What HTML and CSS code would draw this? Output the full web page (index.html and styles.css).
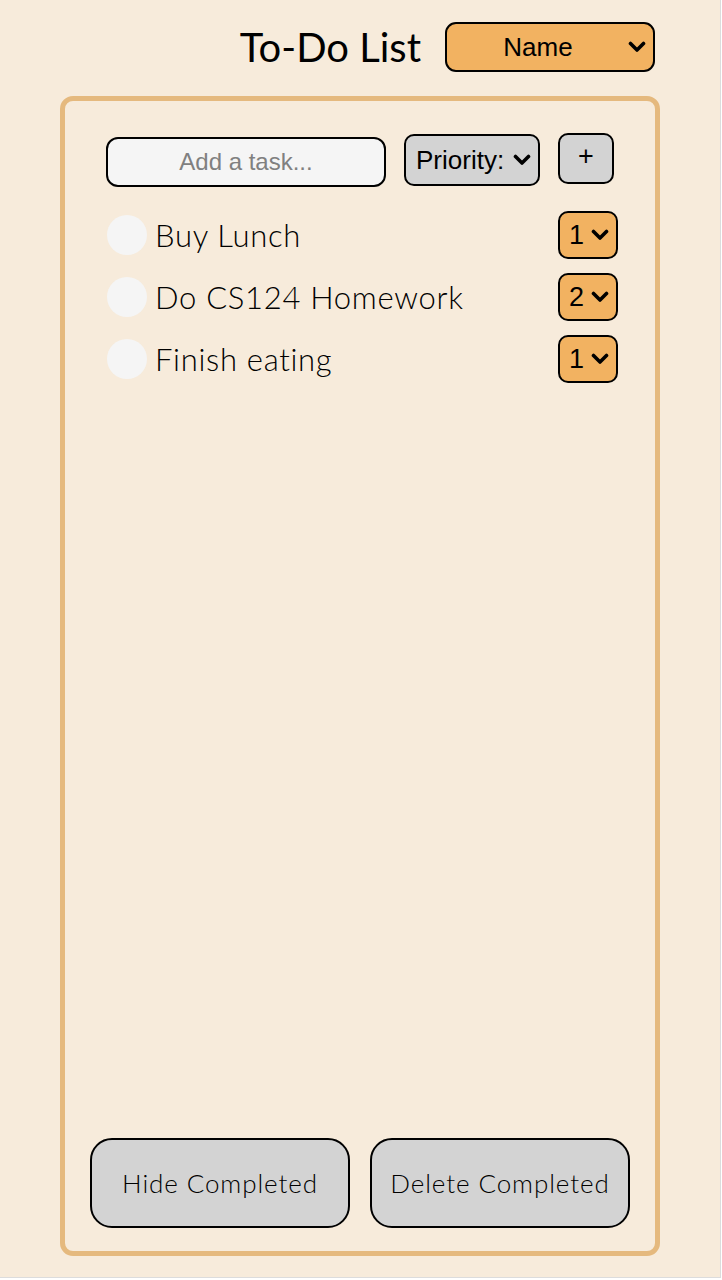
FILE: index.html
```html
<!DOCTYPE html>
<html lang="en">
<head>
<meta charset="utf-8">
<title>To-Do List</title>
<link rel="stylesheet" href="styles.css">
</head>
<body>
<div class="app">
  <header class="header">
    <h1 class="title">To-Do List</h1>
    <div class="select-wrap sort-wrap">
      <select class="sort-select">
        <option>Name</option>
        <option>Priority</option>
        <option>Date</option>
      </select>
      <svg class="chev" viewBox="0 0 18 12"><path d="M2.5 2.5 L9 9 L15.5 2.5" fill="none" stroke="#000" stroke-width="3.6" stroke-linecap="round" stroke-linejoin="round"/></svg>
    </div>
  </header>

  <main class="card">
    <div class="card-top">
      <div class="add-row">
        <input class="task-input" type="text" placeholder="Add a task...">
        <div class="select-wrap prio-wrap">
          <select class="prio-select">
            <option>Priority:</option>
            <option>1</option>
            <option>2</option>
            <option>3</option>
          </select>
          <svg class="chev" viewBox="0 0 18 12"><path d="M2.5 2.5 L9 9 L15.5 2.5" fill="none" stroke="#000" stroke-width="3.6" stroke-linecap="round" stroke-linejoin="round"/></svg>
        </div>
        <button class="add-btn" type="button">+</button>
      </div>

      <ul class="tasks">
        <li class="task">
          <span class="check"></span>
          <span class="task-name">Buy Lunch</span>
          <div class="select-wrap small-wrap">
            <select class="small-select"><option>1</option><option>2</option><option>3</option></select>
            <svg class="chev" viewBox="0 0 18 12"><path d="M2.5 2.5 L9 9 L15.5 2.5" fill="none" stroke="#000" stroke-width="3.6" stroke-linecap="round" stroke-linejoin="round"/></svg>
          </div>
        </li>
        <li class="task">
          <span class="check"></span>
          <span class="task-name">Do CS124 Homework</span>
          <div class="select-wrap small-wrap">
            <select class="small-select"><option>2</option><option>1</option><option>3</option></select>
            <svg class="chev" viewBox="0 0 18 12"><path d="M2.5 2.5 L9 9 L15.5 2.5" fill="none" stroke="#000" stroke-width="3.6" stroke-linecap="round" stroke-linejoin="round"/></svg>
          </div>
        </li>
        <li class="task">
          <span class="check"></span>
          <span class="task-name">Finish eating</span>
          <div class="select-wrap small-wrap">
            <select class="small-select"><option>1</option><option>2</option><option>3</option></select>
            <svg class="chev" viewBox="0 0 18 12"><path d="M2.5 2.5 L9 9 L15.5 2.5" fill="none" stroke="#000" stroke-width="3.6" stroke-linecap="round" stroke-linejoin="round"/></svg>
          </div>
        </li>
      </ul>
    </div>

    <div class="actions">
      <button class="action-btn" type="button">Hide Completed</button>
      <button class="action-btn" type="button">Delete Completed</button>
    </div>
  </main>
</div>
</body>
</html>
```
FILE: styles.css
```css
html, body {
  margin: 0;
  padding: 0;
  background: #ffffff;
}

.app {
  box-sizing: border-box;
  width: 721px;
  height: 1278px;
  background: #f7ebdb;
  border-right: 1px solid #dcdcdc;
  border-bottom: 1px solid #dcdcdc;
  font-family: "Lato", "Liberation Sans", sans-serif;
  color: #000;
  display: flex;
  flex-direction: column;
}

.header {
  display: flex;
  justify-content: flex-end;
  align-items: center;
  gap: 24px;
  height: 50px;
  margin-top: 22px;
  padding-right: 65px;
}

.title {
  margin: 0;
  font-size: 40px;
  font-weight: 400;
  line-height: 50px;
}

.select-wrap {
  position: relative;
  display: flex;
}

.select-wrap select {
  appearance: none;
  -webkit-appearance: none;
  box-sizing: border-box;
  border: 2px solid #000;
  color: #000;
  font-family: "Liberation Sans", Arial, sans-serif;
  outline: none;
  margin: 0;
}

.chev {
  position: absolute;
  width: 18px;
  height: 12px;
  top: 50%;
  right: 9px;
  transform: translateY(-50%);
  pointer-events: none;
}

.sort-select {
  width: 210px;
  height: 50px;
  border-radius: 11px;
  background: #f2b261;
  font-size: 26px;
  padding: 0 24px 0 0;
  text-align: center;
  text-align-last: center;
}

.card {
  box-sizing: border-box;
  width: 600px;
  height: 1160px;
  margin: 24px 0 0 60px;
  border: 5px solid #e5b97e;
  border-radius: 13px;
  display: flex;
  flex-direction: column;
  justify-content: space-between;
}

.card-top {
  padding: 32px 37px 0 41px;
}

.add-row {
  display: flex;
  align-items: center;
  gap: 18px;
}

.task-input {
  box-sizing: border-box;
  width: 280px;
  height: 50px;
  border: 2px solid #000;
  border-radius: 12px;
  background: #f5f5f5;
  font-family: "Liberation Sans", Arial, sans-serif;
  font-size: 24px;
  text-align: center;
  outline: none;
  margin: 0;
  margin-top: 3px;
}

.task-input::placeholder {
  color: #808080;
}

.prio-select {
  width: 136px;
  height: 52px;
  border-radius: 10px;
  background: #d3d3d3;
  font-size: 26px;
  padding: 0 0 0 10px;
}

.add-btn {
  box-sizing: border-box;
  width: 56px;
  height: 51px;
  border: 2px solid #000;
  border-radius: 10px;
  background: #d3d3d3;
  font-family: "Liberation Sans", Arial, sans-serif;
  font-size: 27px;
  color: #000;
  padding: 0 0 4px;
  margin: 0 0 3px;
}

.tasks {
  list-style: none;
  margin: 17px 0 0;
  padding: 0;
}

.task {
  display: flex;
  align-items: center;
  height: 62px;
}

.check {
  width: 40px;
  height: 40px;
  border-radius: 50%;
  background: #f5f5f5;
  margin-left: 1px;
  flex-shrink: 0;
}

.task-name {
  flex: 1;
  margin-left: 8px;
  font-size: 31px;
  font-weight: 300;
  letter-spacing: 0.7px;
  line-height: 40px;
}

.small-select {
  width: 60px;
  height: 48px;
  border-radius: 10px;
  background: #f2b261;
  font-size: 27px;
  padding: 0 0 0 9px;
}

.small-wrap .chev {
  right: 9px;
}

.actions {
  display: flex;
  gap: 20px;
  padding: 0 25px 23px;
}

.action-btn {
  box-sizing: border-box;
  width: 260px;
  height: 90px;
  border: 2px solid #000;
  border-radius: 22px;
  background: #d3d3d3;
  font-family: "Lato", "Liberation Sans", sans-serif;
  font-size: 26px;
  font-weight: 300;
  letter-spacing: 0.9px;
  color: #000;
  margin: 0;
}
```
